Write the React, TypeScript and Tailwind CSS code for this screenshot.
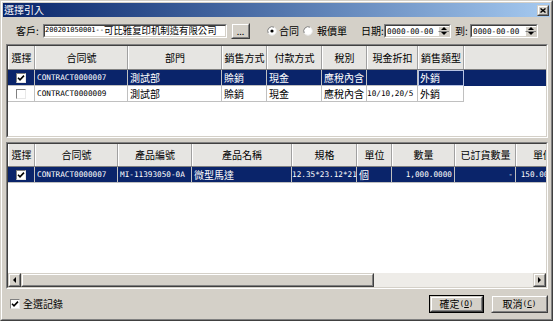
import React from "react";

type P = { className?: string; innerClassName?: string; children?: React.ReactNode };

function Sunken({ className = "", innerClassName = "", children }: P) {
  return (
    <div className={"border border-t-[#808080] border-l-[#808080] border-r-white border-b-white " + className}>
      <div className={"w-full h-full border border-t-[#404040] border-l-[#404040] border-r-[#d4d0c8] border-b-[#d4d0c8] " + innerClassName}>
        {children}
      </div>
    </div>
  );
}

function Raised({ className = "", innerClassName = "", children }: P) {
  return (
    <div className={"border border-t-[#d4d0c8] border-l-[#d4d0c8] border-r-[#404040] border-b-[#404040] bg-[#d4d0c8] " + className}>
      <div className={"w-full h-full border border-t-white border-l-white border-r-[#808080] border-b-[#808080] " + innerClassName}>
        {children}
      </div>
    </div>
  );
}

function Lat({ children, className = "" }: { children: React.ReactNode; className?: string }) {
  return <span className={"font-['DejaVu_Sans_Mono',monospace] text-[7.7px] " + className}>{children}</span>;
}

function isLatin(s: string) {
  return /^[\x00-\x7F]+$/.test(s);
}

function Txt({ s }: { s: string }) {
  if (!s) return null;
  return isLatin(s) ? <Lat>{s}</Lat> : <span>{s}</span>;
}

function Check({ checked }: { checked: boolean }) {
  return (
    <div className="w-[10px] h-[10px] shrink-0 border border-t-[#808080] border-l-[#808080] border-r-[#e8e8e8] border-b-[#e8e8e8] bg-white flex items-center justify-center">
      {checked && (
        <svg width="8" height="8" viewBox="0 0 8 8">
          <polyline points="1,3.8 3,5.8 7,1.6" fill="none" stroke="#000" strokeWidth="1.6" />
        </svg>
      )}
    </div>
  );
}

function Radio({ on }: { on: boolean }) {
  return (
    <svg width="10" height="10" viewBox="0 0 10 10">
      <circle cx="5" cy="5" r="4.3" fill="#fff" />
      <path d="M1.2 7 A4.3 4.3 0 0 1 7 1.2" fill="none" stroke="#808080" strokeWidth="1" />
      <path d="M7 1.2 A4.3 4.3 0 0 1 8.8 7 A4.3 4.3 0 0 1 1.2 7" fill="none" stroke="#e8e8e8" strokeWidth="1" />
      {on && <circle cx="5" cy="5" r="1.6" fill="#000" />}
    </svg>
  );
}

function Tri({ dir }: { dir: "up" | "down" | "left" | "right" }) {
  const pts =
    dir === "up" ? "0,3 3,0 6,3" : dir === "down" ? "0,0 6,0 3,3" : dir === "left" ? "3,0 3,6 0,3" : "0,0 0,6 3,3";
  const w = dir === "up" || dir === "down" ? 6 : 3;
  const h = dir === "up" || dir === "down" ? 3 : 6;
  return (
    <svg width={w} height={h} viewBox={`0 0 ${w} ${h}`}>
      <polygon points={pts} fill="#000" />
    </svg>
  );
}

function DateBox({ w }: { w: string }) {
  return (
    <Sunken className={w + " h-[14px]"} innerClassName="bg-white flex items-center">
      <div className="flex-1 pl-[1px] leading-none whitespace-nowrap">
        <Lat>0000-00-00</Lat>
      </div>
      <div className="w-[11px] h-full flex flex-col shrink-0">
        <div className="flex-1 bg-[#d4d0c8] border-t border-l border-t-white border-l-white border-b border-b-[#808080] flex items-center justify-center">
          <Tri dir="up" />
        </div>
        <div className="flex-1 bg-[#d4d0c8] border-l border-l-white flex items-center justify-center">
          <Tri dir="down" />
        </div>
      </div>
    </Sunken>
  );
}

type Cell = { s?: string; check?: boolean; right?: boolean; focus?: boolean; tight?: boolean };

function HeaderRow({ cols, labels, h }: { cols: number[]; labels: string[]; h: string }) {
  return (
    <div className={"flex shrink-0 bg-[#e6e5e2] border-b border-b-[#808080] " + h}>
      {cols.map((w, i) => (
        <div
          key={i}
          style={{ width: w }}
          className="shrink-0 h-full border-r border-r-[#a0a0a0] border-l border-l-white flex items-center justify-center whitespace-nowrap overflow-hidden"
        >
          {labels[i]}
        </div>
      ))}
      <div className="flex-1 shrink-0 h-full border-l border-l-white" />
    </div>
  );
}

function BodyRow({ cols, cells, sel }: { cols: number[]; cells: Cell[]; sel: boolean }) {
  return (
    <div className={"flex h-[16px] shrink-0 " + (sel ? "bg-[#0a246a] text-white" : "bg-white text-black")}>
      {cols.map((w, i) => {
        const c = cells[i] || {};
        return (
          <div
            key={i}
            style={{ width: w }}
            className={
              "shrink-0 h-full border-r border-b border-r-[#c0c0c0] border-b-[#c0c0c0] flex items-center whitespace-nowrap overflow-hidden " +
              (c.check !== undefined
                ? "justify-center "
                : c.right
                ? "justify-end pr-[2px] "
                : c.tight
                ? "pl-0 "
                : "pl-[2px] ") +
              (c.focus ? "outline outline-1 -outline-offset-1 outline-[#b8c4e4] " : "")
            }
          >
            {c.check !== undefined ? <Check checked={c.check} /> : <Txt s={c.s || ""} />}
          </div>
        );
      })}
      <div className="flex-1 shrink-0 h-full" />
    </div>
  );
}

const upperCols = [27, 93, 94, 45, 55, 45, 51, 46];
const upperLabels = ["選擇", "合同號", "部門", "銷售方式", "付款方式", "稅別", "現金折扣", "銷售類型"];
const upperRows: { sel: boolean; cells: Cell[] }[] = [
  {
    sel: true,
    cells: [
      { check: true },
      { s: "CONTRACT0000007" },
      { s: "測試部" },
      { s: "賒銷" },
      { s: "現金" },
      { s: "應稅內含" },
      { s: "" },
      { s: "外銷", focus: true },
    ],
  },
  {
    sel: false,
    cells: [
      { check: false },
      { s: "CONTRACT0000009" },
      { s: "測試部" },
      { s: "賒銷" },
      { s: "現金" },
      { s: "應稅內含" },
      { s: "10/10,20/5", tight: true },
      { s: "外銷" },
    ],
  },
];

const lowerCols = [27, 83, 74, 100, 65, 35, 63, 61, 54];
const lowerLabels = ["選擇", "合同號", "產品編號", "產品名稱", "規格", "單位", "數量", "已訂貨數量", "單價"];
const lowerRow: Cell[] = [
  { check: true },
  { s: "CONTRACT0000007" },
  { s: "MI-11393050-0A" },
  { s: "微型馬達" },
  { s: "12.35*23.12*21", tight: true },
  { s: "個" },
  { s: "1,000.0000", right: true },
  { s: "-", right: true },
  { s: "150.000000", right: true },
];

export default function App() {
  return (
    <div className="w-[553px] h-[321px] overflow-hidden font-['Noto_Sans_CJK_TC',sans-serif] text-[10px] leading-none text-black">
      <div className="w-full h-full border border-t-[#d4d0c8] border-l-[#d4d0c8] border-r-[#404040] border-b-[#404040] bg-[#d4d0c8]">
        <div className="w-full h-full border border-t-white border-l-white border-r-[#808080] border-b-[#808080] p-[1px] flex flex-col">
          {/* Title bar */}
          <div className="h-[14px] shrink-0 bg-linear-to-r from-[#0a246a] to-[#a6caf0] flex items-center justify-between pl-[1px] pr-[1px]">
            <span className="text-white text-[10px]">選擇引入</span>
            <Raised className="w-[12px] h-[11px]" innerClassName="flex items-center justify-center">
              <svg width="6" height="5" viewBox="0 0 6 5">
                <path d="M0.5 0.5 L5.5 4.5 M5.5 0.5 L0.5 4.5" stroke="#000" strokeWidth="1.4" />
              </svg>
            </Raised>
          </div>

          {/* Toolbar */}
          <div className="h-[27px] shrink-0 flex items-center pl-[13px] whitespace-nowrap">
            <span className="w-[27px] shrink-0">客戶:</span>
            <Sunken className="w-[184px] h-[14px] shrink-0" innerClassName="bg-white flex items-center whitespace-nowrap">
              <span className="font-['DejaVu_Sans_Mono',monospace] text-[7px] leading-none">200201050001--</span>
              <span className="text-[9.4px] leading-none">可比雅复印机制造有限公司</span>
            </Sunken>
            <Raised className="ml-[4px] w-[19px] h-[16px] shrink-0" innerClassName="flex items-end justify-center pb-[1px]">
              <span className="text-[9px]">...</span>
            </Raised>
            <div className="ml-[17px] shrink-0 flex items-center">
              <Radio on={true} />
            </div>
            <span className="ml-[2px] w-[24px] shrink-0">合同</span>
            <div className="shrink-0 flex items-center">
              <Radio on={false} />
            </div>
            <span className="ml-[4px] w-[44px] shrink-0">報價單</span>
            <span className="w-[23px] shrink-0">日期:</span>
            <DateBox w="w-[67px] shrink-0" />
            <span className="ml-[4px] w-[15px] shrink-0">到:</span>
            <DateBox w="w-[68px] shrink-0" />
          </div>

          {/* Upper grid */}
          <Sunken className="h-[94px] shrink-0 ml-[3px] mr-[2px]" innerClassName="bg-white flex flex-col overflow-hidden">
            <HeaderRow cols={upperCols} labels={upperLabels} h="h-[24px]" />
            {upperRows.map((r, i) => (
              <BodyRow key={i} cols={upperCols} cells={r.cells} sel={r.sel} />
            ))}
            <div className="flex-1" />
          </Sunken>

          <div className="h-[4px] shrink-0" />

          {/* Lower grid */}
          <Sunken className="h-[147px] shrink-0 ml-[3px] mr-[2px]" innerClassName="bg-white flex flex-col overflow-hidden">
            <HeaderRow cols={lowerCols} labels={lowerLabels} h="h-[23px]" />
            <BodyRow cols={lowerCols} cells={lowerRow} sel={true} />
            <div className="flex-1" />
            <div className="h-[14px] shrink-0 flex bg-[#eeece8]">
              <Raised className="w-[13px] h-full shrink-0" innerClassName="flex items-center justify-center">
                <Tri dir="left" />
              </Raised>
              <Raised className="w-[353px] h-full shrink-0" />
              <div className="flex-1 h-full" />
              <Raised className="w-[13px] h-full shrink-0" innerClassName="flex items-center justify-center">
                <Tri dir="right" />
              </Raised>
            </div>
          </Sunken>

          {/* Bottom bar */}
          <div className="flex-1 flex items-center pl-[7px] pr-[2px] whitespace-nowrap">
            <Check checked={true} />
            <span className="ml-[3px]">全選記錄</span>
            <div className="flex-1" />
            <div className="w-[55px] h-[18px] border border-black">
              <Raised className="w-full h-full" innerClassName="flex items-center justify-center whitespace-nowrap">
                <span>確定</span>
                <Lat>
                  (<span className="underline">O</span>)
                </Lat>
              </Raised>
            </div>
            <Raised className="ml-[7px] w-[57px] h-[18px]" innerClassName="flex items-center justify-center whitespace-nowrap">
              <span>取消</span>
              <Lat>
                (<span className="underline">C</span>)
              </Lat>
            </Raised>
          </div>
        </div>
      </div>
    </div>
  );
}
